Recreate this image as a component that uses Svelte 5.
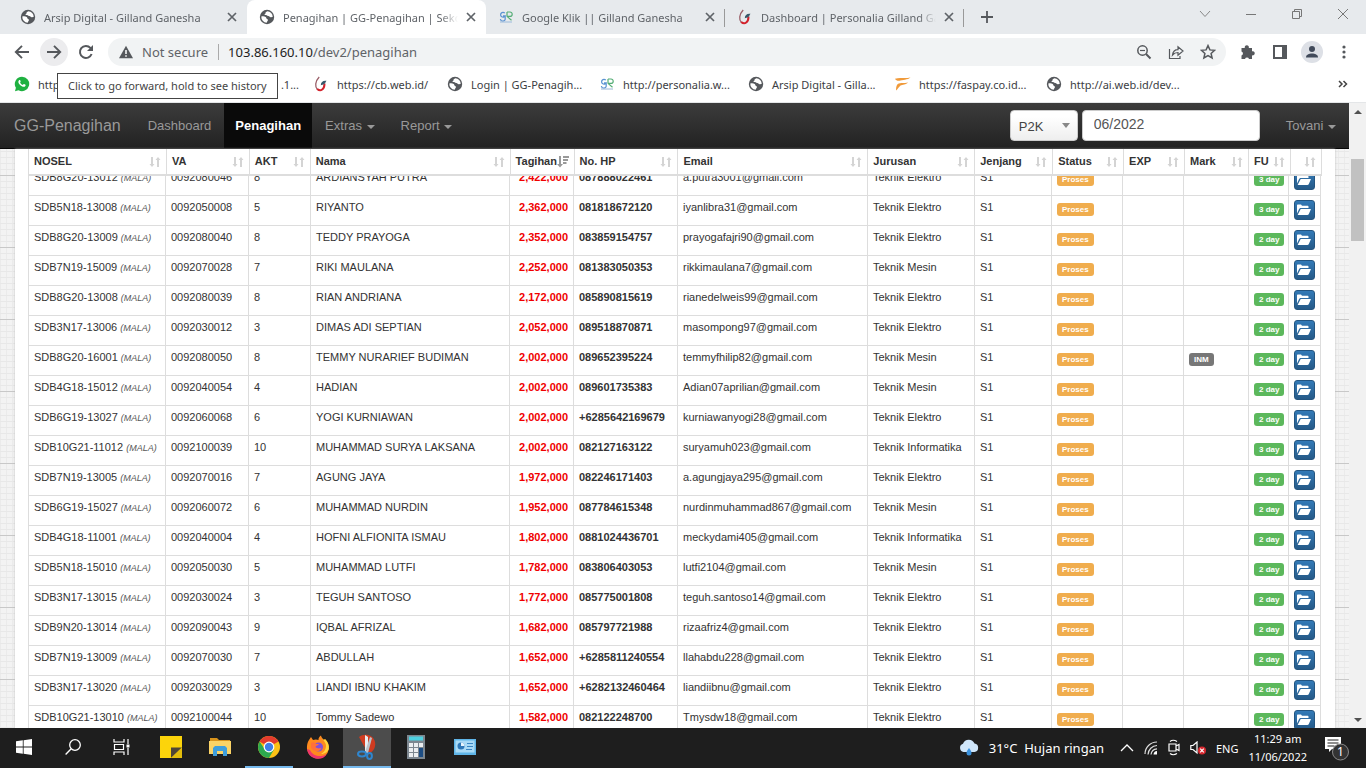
<script>
  const cols = [
    { t: 'NOSEL', h: 138, b: 137 },
    { t: 'VA', h: 83, b: 83 },
    { t: 'AKT', h: 61, b: 62 },
    { t: 'Nama', h: 200, b: 199 },
    { t: 'Tagihan', h: 64, b: 64, sorted: true },
    { t: 'No. HP', h: 104, b: 104 },
    { t: 'Email', h: 190, b: 190 },
    { t: 'Jurusan', h: 107, b: 107 },
    { t: 'Jenjang', h: 78, b: 77 },
    { t: 'Status', h: 71, b: 71 },
    { t: 'EXP', h: 61, b: 61 },
    { t: 'Mark', h: 64, b: 65 },
    { t: 'FU', h: 42, b: 40 },
    { t: '', h: 32, b: 33 }
  ];
  const headTotal = cols.reduce((s, c) => s + c.h, 0);
  const bodyTotal = cols.reduce((s, c) => s + c.b, 0);

  const E = 'Teknik Elektro', M = 'Teknik Mesin', I = 'Teknik Informatika';
  const rows = [
    ['SDB8G20-13012', '0092080046', 8, 'ARDIANSYAH PUTRA', '2,422,000', '087888022461', 'a.putra3001@gmail.com', E, 3],
    ['SDB5N18-13008', '0092050008', 5, 'RIYANTO', '2,362,000', '081818672120', 'iyanlibra31@gmail.com', E, 3],
    ['SDB8G20-13009', '0092080040', 8, 'TEDDY PRAYOGA', '2,352,000', '083859154757', 'prayogafajri90@gmail.com', E, 2],
    ['SDB7N19-15009', '0092070028', 7, 'RIKI MAULANA', '2,252,000', '081383050353', 'rikkimaulana7@gmail.com', M, 2],
    ['SDB8G20-13008', '0092080039', 8, 'RIAN ANDRIANA', '2,172,000', '085890815619', 'rianedelweis99@gmail.com', E, 2],
    ['SDB3N17-13006', '0092030012', 3, 'DIMAS ADI SEPTIAN', '2,052,000', '089518870871', 'masompong97@gmail.com', E, 2],
    ['SDB8G20-16001', '0092080050', 8, 'TEMMY NURARIEF BUDIMAN', '2,002,000', '089652395224', 'temmyfhilip82@gmail.com', M, 2, 'INM'],
    ['SDB4G18-15012', '0092040054', 4, 'HADIAN', '2,002,000', '089601735383', 'Adian07aprilian@gmail.com', M, 2],
    ['SDB6G19-13027', '0092060068', 6, 'YOGI KURNIAWAN', '2,002,000', '+6285642169679', 'kurniawanyogi28@gmail.com', E, 2],
    ['SDB10G21-11012', '0092100039', 10, 'MUHAMMAD SURYA LAKSANA', '2,002,000', '082127163122', 'suryamuh023@gmail.com', I, 3],
    ['SDB7N19-13005', '0092070016', 7, 'AGUNG JAYA', '1,972,000', '082246171403', 'a.agungjaya295@gmail.com', E, 2],
    ['SDB6G19-15027', '0092060072', 6, 'MUHAMMAD NURDIN', '1,952,000', '087784615348', 'nurdinmuhammad867@gmail.com', M, 2],
    ['SDB4G18-11001', '0092040004', 4, 'HOFNI ALFIONITA ISMAU', '1,802,000', '0881024436701', 'meckydami405@gmail.com', I, 2],
    ['SDB5N18-15010', '0092050030', 5, 'MUHAMMAD LUTFI', '1,782,000', '083806403053', 'lutfi2104@gmail.com', M, 2],
    ['SDB3N17-13015', '0092030024', 3, 'TEGUH SANTOSO', '1,772,000', '085775001808', 'teguh.santoso14@gmail.com', E, 2],
    ['SDB9N20-13014', '0092090043', 9, 'IQBAL AFRIZAL', '1,682,000', '085797721988', 'rizaafriz4@gmail.com', E, 2],
    ['SDB7N19-13009', '0092070030', 7, 'ABDULLAH', '1,652,000', '+6285811240554', 'llahabdu228@gmail.com', E, 2],
    ['SDB3N17-13020', '0092030029', 3, 'LIANDI IBNU KHAKIM', '1,652,000', '+6282132460464', 'liandiibnu@gmail.com', E, 2],
    ['SDB10G21-13010', '0092100044', 10, 'Tommy Sadewo', '1,582,000', '082122248700', 'Tmysdw18@gmail.com', E, 2]
  ];

  const tabs = [
    { icon: 'globe', t: 'Arsip Digital - Gilland Ganesha' },
    { icon: 'globe', t: 'Penagihan | GG-Penagihan | Sekolah', active: true },
    { icon: 'gg', t: 'Google Klik || Gilland Ganesha', sep: true },
    { icon: 'swirl', t: 'Dashboard | Personalia Gilland Ganesha', sep: true }
  ];
  const marks = [
    { icon: 'swirl', t: 'https://cb.web.id/', w: 134 },
    { icon: 'globe', t: 'Login | GG-Penagih...', w: 152 },
    { icon: 'gg', t: 'http://personalia.w...', w: 149 },
    { icon: 'globe', t: 'Arsip Digital - Gilla...', w: 147 },
    { icon: 'faspay', t: 'https://faspay.co.id...', w: 151 },
    { icon: 'globe', t: 'http://ai.web.id/dev...', w: 151 }
  ];
  let period = $state('06/2022');
</script>

{#snippet fav(name)}
  <svg class="fav" viewBox="0 0 16 16" aria-hidden="true">
    {#if name === 'globe'}
      <circle cx="8" cy="8" r="7.2" fill="#55585c" />
      <path d="M2.300 7.600c1.700-.4 3.300-.3 4.400.5.8.6.4 1.500 1.300 1.900.9.3 1.300.9.7 1.800-.5.8-.9 1.200-1 2A5.800 5.800 0 0 1 2.300 7.600zM8.300 2.200c-.9.7-2 .8-1.700 1.800.3.9-1.200.7-1.100 1.500.2 1 2.200.2 3 1.200.6.8 1.800.3 2.300 1 .6.7 1.800.5 2.900.4A5.800 5.800 0 0 0 8.300 2.200z" fill="#fff" />
    {:else if name === 'gg'}
      <path d="M6.800 4.200A2.400 2.400 0 1 0 7.200 6.800H5M7.200 6.800v2.600a2.400 2.400 0 0 1-4.800.6" fill="none" stroke="#5b93d2" stroke-width="1.200" />
      <path d="M9 3h3a2.200 2.200 0 0 1 0 4.400H9.200M9 7.400l4.500 3.800M9 3v4.400" fill="none" stroke="#55ad76" stroke-width="1.200" />
      <path d="M2 13h12" stroke="#a9c1de" stroke-width="1.200" />
    {:else if name === 'swirl'}
      <path d="M6.200 1C2 5.500 1.800 10.500 4.400 13.500" fill="none" stroke="#9a5f68" stroke-width="1.300" />
      <path d="M4.200 13c3.600 3 7.300.3 7.300-5.500" fill="none" stroke="#d3222c" stroke-width="2" />
      <path d="M7.800 9.200c0-3.300 2.200-4.800 5.700-4.400-.8 1-1 2.400-2.400 3.400z" fill="#39596b" />
    {:else if name === 'faspay'}
      <path d="M0 2.800C5 1 9 3 15.500 1.500 13 4 7 3.700 4.500 4.700 3 5.200 1 4.600 0 2.800zM2.500 8.300C6 6 9 7.500 13 6.500 11 9 7.500 8.300 5.500 9.500 4 10.700 2.500 13.500 1 14.500c0-2.500.3-4.500 1.500-6.200z" fill="#f09a3a" />
    {/if}
  </svg>
{/snippet}

{#snippet cross()}
  <svg width="10" height="10" viewBox="0 0 10 10" aria-hidden="true"><path d="M1 1l8 8M9 1L1 9" stroke="#5f6368" stroke-width="1.700" /></svg>
{/snippet}

<div class="screen">
  <header class="browser">
    <div class="strip">
      {#each tabs as tab}
        <div class="tab" class:active={tab.active} class:sep={tab.sep}>
          {@render fav(tab.icon)}
          <span class="tabtext">{tab.t}</span>
          <button class="plain" aria-label="Close tab">{@render cross()}</button>
        </div>
      {/each}
      <button class="plain newtab" aria-label="New tab">
        <svg width="14" height="14" viewBox="0 0 14 14"><path d="M7 1v12M1 7h12" stroke="#55585c" stroke-width="1.800" /></svg>
      </button>
      <div class="winctl">
        <button class="plain" aria-label="Search tabs"><svg width="12" height="12" viewBox="0 0 12 12"><path d="M1 3l5 5.500L11 3" fill="none" stroke="#888" /></svg></button>
        <button class="plain" aria-label="Minimize"><svg width="12" height="12" viewBox="0 0 12 12"><path d="M1 6.500h10" stroke="#777" /></svg></button>
        <button class="plain" aria-label="Restore"><svg width="12" height="12" viewBox="0 0 12 12"><path d="M1.500 3.500h7v7h-7zM3.500 3.500v-2h7v7h-2" fill="none" stroke="#777" /></svg></button>
        <button class="plain" aria-label="Close window"><svg width="12" height="12" viewBox="0 0 12 12"><path d="M1 1l10 10M11 1L1 11" stroke="#777" /></svg></button>
      </div>
    </div>

    <div class="toolbar">
      <button class="plain tool" aria-label="Back"><svg width="16" height="16" viewBox="0 0 16 16"><path d="M15 8H2M8 1.800L1.800 8 8 14.200" fill="none" stroke="#55585c" stroke-width="1.900" /></svg></button>
      <button class="plain tool hover" aria-label="Forward"><svg width="16" height="16" viewBox="0 0 16 16"><path d="M1 8h13M8 1.800L14.200 8 8 14.200" fill="none" stroke="#55585c" stroke-width="1.900" /></svg></button>
      <button class="plain tool" aria-label="Reload"><svg width="16" height="16" viewBox="0 0 16 16"><path d="M13.600 10A6 6 0 1 1 12.400 3.900L14 5.500" fill="none" stroke="#55585c" stroke-width="2" /><path d="M15 1v6H9z" fill="#55585c" /></svg></button>
      <div class="omni">
        <svg width="14" height="14" viewBox="0 0 14 14" aria-hidden="true"><path d="M7 .8L14 13.200H0z" fill="#55585c" /><path d="M7 5v4M7 10.200v1.600" stroke="#fff" stroke-width="1.500" /></svg>
        <span class="notsecure">Not secure</span>
        <span class="url"><b>103.86.160.10</b>/dev2/penagihan</span>
        <button class="plain tool" aria-label="Zoom"><svg width="16" height="16" viewBox="0 0 16 16"><circle cx="6.500" cy="6.500" r="4.700" fill="none" stroke="#55585c" stroke-width="1.500" /><path d="M10 10l4.500 4.500" stroke="#55585c" stroke-width="1.900" /><path d="M4 6.500h5" stroke="#55585c" stroke-width="1.200" /></svg></button>
        <button class="plain tool" aria-label="Share"><svg width="16" height="16" viewBox="0 0 16 16"><path d="M1.500 5v9.500h10.500V12M4.500 11c.5-3.700 2.500-5.300 5.500-5.300V2.800L15 7l-5 4.200V8.500c-2.300 0-4 .7-5.500 2.500z" fill="none" stroke="#55585c" stroke-width="1.200" /></svg></button>
        <button class="plain tool" aria-label="Bookmark"><svg width="16" height="16" viewBox="0 0 16 16"><path d="M8 1.600l1.900 4.300 4.700.4-3.500 3.100 1 4.600L8 11.600 3.900 14l1-4.600L1.400 6.300l4.700-.4z" fill="none" stroke="#55585c" stroke-width="1.500" /></svg></button>
      </div>
      <button class="plain tool" aria-label="Extensions"><svg width="16" height="16" viewBox="0 0 16 16"><path d="M1.500 4h3.300a2.100 2.100 0 1 1 4 0H12v3.300a2.100 2.100 0 1 1 0 4V15H9a2.100 2.100 0 0 0-4 0H1.500v-3.500a2.100 2.100 0 0 0 0-4z" fill="#55585c" /></svg></button>
      <button class="plain tool" aria-label="Side panel"><svg width="16" height="16" viewBox="0 0 16 16"><path d="M1 1h14v14H1zM3 3v10h7V3z" fill="#55585c" fill-rule="evenodd" /></svg></button>
      <button class="plain tool" aria-label="Profile"><svg width="22" height="22" viewBox="0 0 22 22"><circle cx="11" cy="11" r="11" fill="#dde0e6" /><circle cx="11" cy="8" r="3" fill="#414a5a" /><path d="M5 16.500c0-3 3-4 6-4s6 1 6 4z" fill="#414a5a" /></svg></button>
      <button class="plain tool" aria-label="Menu"><svg width="4" height="16" viewBox="0 0 4 16"><g fill="#55585c"><circle cx="2" cy="3" r="1.600" /><circle cx="2" cy="8" r="1.600" /><circle cx="2" cy="13" r="1.600" /></g></svg></button>
      <div class="tip" role="tooltip">Click to go forward, hold to see history</div>
    </div>

    <nav class="marks">
      <a class="mark wa" href="#wa">
        <svg class="fav" viewBox="0 0 16 16" aria-hidden="true"><path d="M8 .8a7.200 7.200 0 1 1-3.500 13.500L1 15.200l.9-3.400A7.200 7.200 0 0 1 8 .8z" fill="#1fb141" /><path d="M5 4.300c.8-.6 1.200-.3 1.700 1.200-.6.9-.8.9 0 1.900.8 1 1.600 1.400 2.100 1.500.5-.2.7-1.200 1.300-.9 1.600.7 1.800.9 1.300 1.900-1 1.500-3.500.9-5.300-.9C4.300 7.200 3.800 5.500 5 4.300z" fill="#fff" /></svg>
        <span>http</span><span class="rest">.1...</span>
      </a>
      {#each marks as m}
        <a class="mark" href="#bookmark" style:width="{m.w}px">{@render fav(m.icon)}<span>{m.t}</span></a>
      {/each}
      <button class="plain more" aria-label="More bookmarks"><svg width="10" height="8" viewBox="0 0 10 8"><path d="M1 1l3 3-3 3M5.500 1l3 3-3 3" fill="none" stroke="#444" stroke-width="1.500" /></svg></button>
    </nav>
  </header>

  <div class="view">
    <main class="page">
      <nav class="navbar">
        <a class="brand" href="#home">GG-Penagihan</a>
        <a class="item" href="#dashboard">Dashboard</a>
        <a class="item current" href="#penagihan">Penagihan</a>
        <a class="item" href="#extras">Extras <i class="caret"></i></a>
        <a class="item" href="#report">Report <i class="caret"></i></a>
        <form class="filters">
          <span class="selwrap"><select aria-label="Program"><option>P2K</option></select></span>
          <input aria-label="Period" bind:value={period} />
        </form>
        <a class="item user" href="#user">Tovani <i class="caret"></i></a>
      </nav>
      <section class="panel">
        <table class="head">
          <colgroup>{#each cols as c}<col style:width="{(c.h / headTotal) * 100}%" />{/each}</colgroup>
          <thead>
            <tr>
              {#each cols as c}
                <th>
                  <div class="th">
                    <span>{c.t}</span>
                    {#if c.sorted}
                      <svg width="12" height="12" viewBox="0 0 12 12" aria-hidden="true"><path d="M2 0h2v8h2L3 11.500 0 8h2z" fill="#999" /><path d="M6 0h6v2H6zM6 3h5v2H6zM6 6h3.500v2H6z" fill="#999" /></svg>
                    {:else}
                      <svg width="12" height="12" viewBox="0 0 12 12" aria-hidden="true"><path d="M2 1h2v7h1.500L3 11 .5 8H2zM8 11h2V4h1.500L9 1 6.500 4H8z" fill="#d4d4d4" /></svg>
                    {/if}
                  </div>
                </th>
              {/each}
            </tr>
          </thead>
        </table>
        <div class="scroll">
          <table class="body">
            <colgroup>{#each cols as c}<col style:width="{(c.b / bodyTotal) * 100}%" />{/each}</colgroup>
            <tbody>
              {#each rows as r}
                <tr>
                  <td>{r[0]} <em>(MALA)</em></td>
                  <td>{r[1]}</td>
                  <td>{r[2]}</td>
                  <td>{r[3]}</td>
                  <td class="bill">{r[4]}</td>
                  <td class="phone">{r[5]}</td>
                  <td>{r[6]}</td>
                  <td>{r[7]}</td>
                  <td>S1</td>
                  <td><span class="label warn">Proses</span></td>
                  <td></td>
                  <td>{#if r[9]}<span class="label">{r[9]}</span>{/if}</td>
                  <td><span class="label ok">{r[8]} day</span></td>
                  <td class="act"><button class="open" aria-label="Open"><svg width="14" height="12" viewBox="0 0 14 12"><path d="M0 9.500V1.500C0 .9.400.5 1 .5h3l1 1.300h5.500c.6 0 1 .4 1 1V4H4C3 4 2.500 4.300 2 5.200z" fill="#fff" /><path d="M3.700 5H14l-2.200 5c-.3.600-.7 1-1.400 1H.6z" fill="#fff" /></svg></button></td>
                </tr>
              {/each}
            </tbody>
          </table>
        </div>
      </section>
    </main>
    <div class="scrollbar" aria-hidden="true"><i class="up"></i><i class="thumb"></i><i class="down"></i></div>
  </div>

  <footer class="taskbar">
    <button class="plain app" aria-label="Start"><svg width="16" height="16" viewBox="0 0 16 16"><path d="M0 2.300l6.800-1v6.300H0zM7.600 1.200L16 0v7.600H7.600zM0 8.400h6.800v6.300L0 13.700zM7.600 8.400H16V16l-8.400-1.200z" fill="#fff" /></svg></button>
    <button class="plain app" aria-label="Search"><svg width="16" height="16" viewBox="0 0 16 16"><circle cx="10" cy="6" r="5.300" fill="none" stroke="#fff" stroke-width="1.300" /><path d="M6.200 9.800L.6 15.400" stroke="#fff" stroke-width="1.400" /></svg></button>
    <button class="plain app" aria-label="Task view"><svg width="18" height="16" viewBox="0 0 18 16"><path d="M1 0v3h10V0M1 16v-3h10v3M1.500 5.500h9v5h-9zM15 0v5M15 9v7" fill="none" stroke="#fff" stroke-width="1.200" /><path d="M13.500 5.500h3v3h-3z" fill="#fff" /></svg></button>
    <button class="plain app" aria-label="Sticky notes"><svg width="22" height="22" viewBox="0 0 22 22"><path d="M0 0h22v22H0z" fill="#fcd40b" /><path d="M11 11.500h11L11 22z" fill="#4f4636" /><path d="M22 11.500V22H11z" fill="#e3bd0c" /></svg></button>
    <button class="plain app" aria-label="File explorer"><svg width="22" height="20" viewBox="0 0 22 20"><path d="M1 1h7l2 2h11v4H1z" fill="#d9941c" /><path d="M0 4h22v13H0z" fill="#fbd366" /><path d="M4 19v-8l2-2h10l2 2v8h-4v-5H8v5z" fill="#3f9edb" /></svg></button>
    <button class="plain app run" aria-label="Chrome"><svg width="22" height="22" viewBox="0 0 22 22"><circle cx="11" cy="11" r="11" fill="#fbc116" /><path d="M11 11L1.500 5.500A11 11 0 0 1 20.500 5.500z" fill="#e33b2e" /><path d="M1.500 5.500A11 11 0 0 0 11 22l5-8.500H7z" fill="#2da94f" /><circle cx="11" cy="11" r="5.400" fill="#fff" /><circle cx="11" cy="11" r="4.200" fill="#3f7fe8" /></svg></button>
    <button class="plain app" aria-label="Firefox"><svg width="24" height="24" viewBox="0 0 24 24"><path d="M3 5l2-3 2 3c2-.8 4-.7 5.500 0C12.300 3 13.500 1.500 15 .5c.3 2.500 2 3.500 3 4.500l1-1c3 3 4.300 6 3.800 10A11 11 0 0 1 1 14C.7 10.500 1.500 7 3 5z" fill="#ff8a1e" /><path d="M15 .5c.3 3 3 4.500 4.500 8C21 12 19 17 15 19c4 0 7-2.500 7.800-5 .5-4-.8-7-3.800-10l-1 1c-1-1-2.700-2-3-4.500z" fill="#ffd43a" /><path d="M1 14a11 11 0 0 0 20 5c-5 3.500-14 3-17-4z" fill="#f0366a" /><circle cx="12.500" cy="12" r="4.500" fill="#8250d8" /><path d="M5 8c2-1.300 4-.5 5 1h3c-1 1.500-3 1.500-3.500 3 2 2 5 1.500 6 .5-1 5-8 5-10.500 0z" fill="#ff7139" /></svg></button>
    <button class="plain app focus" aria-label="Snipping Tool"><svg width="24" height="26" viewBox="0 0 24 26"><path d="M4 3C9-1 18 0 20 8c1 6-2 10-6 11L9 12z" fill="#cf3b20" /><path d="M10 1l3 2v17l-3-2z" fill="#e9edf0" /><path d="M17 4l-2-1-5 15 3 1z" fill="#b9c1c8" /><ellipse cx="7" cy="20" rx="4" ry="2.400" fill="none" stroke="#2f86cf" stroke-width="2" /><ellipse cx="14.500" cy="22" rx="2.400" ry="3" fill="none" stroke="#2f86cf" stroke-width="2" /></svg></button>
    <button class="plain app" aria-label="Calculator"><svg width="18" height="24" viewBox="0 0 18 24"><path d="M0 0h18v24H0z" fill="#7d8790" /><path d="M2 1.500h14v4H2z" fill="#4ed0e0" /><path d="M2 8h4v4H2zM7 8h4v4H7zM12 8h4v4h-4zM2 13h4v4H2zM7 13h4v4H7zM2 18h4v4H2zM7 18h4v4H7z" fill="#eceff1" /><path d="M12 13h4v9h-4z" fill="#1e4e84" /></svg></button>
    <button class="plain app" aria-label="Control panel"><svg width="22" height="16" viewBox="0 0 22 16"><path d="M0 0h22v16H0z" fill="#5fb5e8" /><path d="M1.500 1.500h19v12h-19z" fill="#a9daf6" /><circle cx="7" cy="7" r="3.500" fill="#2f78b8" /><path d="M7 7V3.500A3.500 3.500 0 0 1 10.500 7z" fill="#e8f4fc" /><path d="M13 4.500h6M13 7.500h6M12 10.500h6" stroke="#3a86c4" stroke-width="1.200" /></svg></button>
    <div class="tray">
      <svg width="20" height="18" viewBox="0 0 20 18" aria-hidden="true"><path d="M4.500 13A4.300 4.300 0 0 1 4 4.700 6.200 6.200 0 0 1 15.500 4.500 4.300 4.300 0 0 1 15.500 13z" fill="#cfe6fa" /><path d="M10 9c2 2.800 2.500 3.700 2.500 5a2.500 2.500 0 0 1-5 0C7.500 12.700 8 11.800 10 9z" fill="#3a92dd" /></svg>
      <span class="weather">31°C&nbsp; Hujan ringan</span>
      <svg width="14" height="8" viewBox="0 0 14 8" aria-hidden="true"><path d="M1 7l6-6 6 6" fill="none" stroke="#fff" stroke-width="1.300" /></svg>
      <svg width="14" height="14" viewBox="0 0 14 14" aria-hidden="true"><g fill="none" stroke="#ddd" stroke-width="1.200"><path d="M1 13A12 12 0 0 1 13 1M4 13.500A9.500 9.500 0 0 1 13 4.500M7 13.500A6.500 6.500 0 0 1 13 7.800" /></g><path d="M9.500 13.500A4 4 0 0 1 13 10v3.500z" fill="#fff" /></svg>
      <svg width="12" height="18" viewBox="0 0 12 18" aria-hidden="true"><path d="M1 5h7v7H1zM8 7l3-1.500v6L8 10M2 2.500Q5 0 9 2.500M2 14.500Q5 17 9 14.500" fill="none" stroke="#fff" stroke-width="1.200" /></svg>
      <svg width="16" height="14" viewBox="0 0 16 14" aria-hidden="true"><path d="M.8 4.500H3L7 1v11L3 8.500H.8z" fill="none" stroke="#fff" stroke-width="1.200" /><circle cx="12" cy="9.500" r="4" fill="#d8282f" /><path d="M10.200 7.700l3.600 3.600M13.800 7.700l-3.600 3.600" stroke="#fff" stroke-width="1.200" /></svg>
      <span class="lang">ENG</span>
      <span class="clock"><span>11:29 am</span><span>11/06/2022</span></span>
      <span class="notice">
        <svg width="24" height="26" viewBox="0 0 24 26" aria-hidden="true"><path d="M0 2h16v12H7l-3 3v-3H0z" fill="#fff" /><path d="M2.500 5h11M2.500 8h11M2.500 11h7" stroke="#1e1e1e" /><circle cx="15.500" cy="17" r="8" fill="#333" stroke="#8a8a8a" /></svg>
        <span class="count">1</span>
      </span>
    </div>
  </footer>
</div>

<style>
  :global(body) { margin: 0; }
  .screen { display: flex; flex-direction: column; height: 100vh; overflow: hidden; font-family: "Liberation Sans", Arial, sans-serif; }
  .plain { border: 0; padding: 0; background: none; display: flex; align-items: center; justify-content: center; flex: none; }
  a { text-decoration: none; color: inherit; }
  svg { flex: none; display: block; }
  .fav { width: 16px; height: 16px; }

  .browser { flex: none; font-family: "Noto Sans", "Open Sans", sans-serif; background: #fff; border-bottom: 1px solid #e4e6e8; }
  .strip { display: flex; height: 34px; background: #e7eaed; padding-left: 8px; align-items: stretch; }
  .tab { box-sizing: border-box; flex: 0 1 239px; min-width: 0; display: flex; align-items: center; gap: 8px; padding: 0 10px 0 12px; font-size: 11px; color: #5f6368; }
  .tab.active { background: #fff; border-radius: 8px 8px 0 0; }
  .tab.sep { background: linear-gradient(#999, #999) right 9px / 1px 18px no-repeat; }
  .tabtext { flex: 1; overflow: hidden; white-space: nowrap; mask-image: linear-gradient(90deg, #000 90%, transparent); }
  .newtab { width: 46px; }
  .winctl { margin-left: auto; display: flex; height: 28px; }
  .winctl .plain { width: 46px; }

  .toolbar { position: relative; display: flex; align-items: center; height: 36px; padding: 0 8px; gap: 4px; }
  .tool { width: 28px; height: 28px; border-radius: 50%; }
  .hover { background: #ececee; }
  .omni { flex: 1; display: flex; align-items: center; height: 28px; margin: 0 4px; padding: 0 4px 0 11px; gap: 4px; border-radius: 14px; background: #f1f3f4; font-size: 13px; color: #5f6368; }
  .notsecure { margin-left: 5px; padding-right: 10px; border-right: 1px solid #aaa; line-height: 16px; }
  .url { flex: 1; margin-left: 5px; }
  .url b { font-weight: 400; color: #222; }
  .tip { position: absolute; left: 57px; top: 39px; z-index: 2; padding: 0 10px; border: 1px solid #444; background: #fff; color: #444; font-size: 11px; line-height: 24px; white-space: nowrap; }
  .marks { display: flex; align-items: center; height: 32px; padding: 0 16px 4px 14px; box-sizing: border-box; font-size: 11px; color: #3c4043; }
  .mark { display: flex; align-items: center; gap: 8px; white-space: nowrap; box-sizing: border-box; }
  .wa { width: 299px; }
  .rest { margin-left: auto; padding-right: 14px; }
  .more { margin-left: auto; width: 14px; height: 14px; }

  .view { flex: 1; min-height: 0; display: flex; }
  .page { flex: 1; min-width: 0; display: flex; flex-direction: column; background-color: #f3f3f3; background-image: linear-gradient(#c8c8c8 1px, transparent 1px), linear-gradient(#e8e8e8 1px, transparent 1px), linear-gradient(90deg, #ebebeb 1px, transparent 1px); background-size: 72px 72px, 6px 6px, 6px 6px; }
  .navbar { flex: none; box-sizing: border-box; height: 46px; display: flex; align-items: stretch; background: linear-gradient(#3c3c3c, #222); border-bottom: 1px solid #080808; color: #999; font-size: 13px; line-height: 46px; }
  .brand { font-size: 16px; padding: 0 14px; }
  .item { padding: 0 13px; }
  .current { padding: 0 11px; background: #0a0a0a; color: #fff; font-weight: 700; }
  .caret { display: inline-block; margin-left: 1px; vertical-align: middle; border: 4px solid transparent; border-top-color: currentColor; border-bottom: 0; }
  .filters { margin: 0 13px 0 auto; display: flex; gap: 4px; align-items: center; }
  .selwrap { position: relative; display: flex; }
  .selwrap::after { content: ""; position: absolute; right: 8px; top: 13px; border: 4px solid transparent; border-top: 5px solid #888; border-bottom: 0; }
  select, .filters input { box-sizing: border-box; height: 31px; border: 1px solid #ccc; border-radius: 4px; font-family: inherit; color: #555; }
  select { width: 68px; appearance: none; padding: 2px 0 0 8px; font-size: 13px; color: #444; background: linear-gradient(#fff 20%, #eee); }
  .filters input { width: 178px; padding: 0 11px 3px; font-size: 14px; background: #fff; }

  .panel { flex: 1; min-height: 0; display: flex; flex-direction: column; margin: 0 14px 0 15px; padding: 0 13px; background: #fff; box-shadow: 0 0 2px #bbb; }
  table { border-spacing: 0; table-layout: fixed; width: 100%; color: #333; font-size: 11px; line-height: 15px; }
  th, td { box-sizing: border-box; border-left: 1px solid #ddd; padding: 0 5px; text-align: left; white-space: nowrap; overflow: hidden; }
  th:last-child, td:last-child { border-right: 1px solid #ddd; }
  th { height: 27px; border-bottom: 2px solid #ddd; }
  .th { display: flex; justify-content: space-between; align-items: center; }
  .scroll { flex: 1; min-height: 0; overflow: hidden; display: flex; align-items: flex-start; padding-right: 1px; }
  .body { margin-top: -10px; }
  td { height: 30px; border-bottom: 1px solid #ddd; vertical-align: top; padding-top: 4px; }
  em { font-size: 9px; color: #555; }
  .bill { color: #f00000; font-weight: 700; text-align: right; }
  .phone { font-weight: 700; }
  .label { display: inline-block; vertical-align: middle; margin-top: 2px; padding: 0 5px; border-radius: 3px; background: #777; color: #fff; font-size: 8px; font-weight: 700; line-height: 13px; }
  .warn { background: #f0ad4e; }
  .ok { background: #5cb85c; }
  .open { display: flex; align-items: center; justify-content: center; width: 21px; height: 20px; padding: 0; border: 1px solid #245580; border-radius: 3px; background: linear-gradient(#337ab7, #265a88); }

  .scrollbar { flex: none; width: 17px; background: #f1f1f1; display: flex; flex-direction: column; align-items: center; }
  .scrollbar i { display: block; border: 4px solid transparent; }
  .scrollbar .up { border-bottom-color: #505050; border-top: 0; margin-top: 7px; }
  .scrollbar .thumb { border: 0; width: 13px; height: 82px; margin-top: 45px; background: #c1c1c1; }
  .scrollbar .down { border-top-color: #505050; border-bottom: 0; margin: auto 0 6px; }

  .taskbar { flex: none; height: 40px; display: flex; background: #1e1e1e; color: #fff; font-family: "Noto Sans", "Open Sans", sans-serif; }
  .app { box-sizing: border-box; width: 48px; border-bottom: 2px solid transparent; margin-right: 1px; }
  .run { border-color: #76b9ed; }
  .focus { background: #4c4c4c; border-color: #76b9ed; }
  .tray { margin-left: auto; display: flex; align-items: center; gap: 10px; padding-right: 17px; font-size: 11px; }
  .weather { font-size: 13px; margin-right: 6px; white-space: nowrap; }
  .clock { display: flex; flex-direction: column; text-align: center; line-height: 18px; }
  .notice { position: relative; margin-left: 8px; }
  .count { position: absolute; left: 12px; top: 9px; font-size: 12px; line-height: 16px; }
</style>
